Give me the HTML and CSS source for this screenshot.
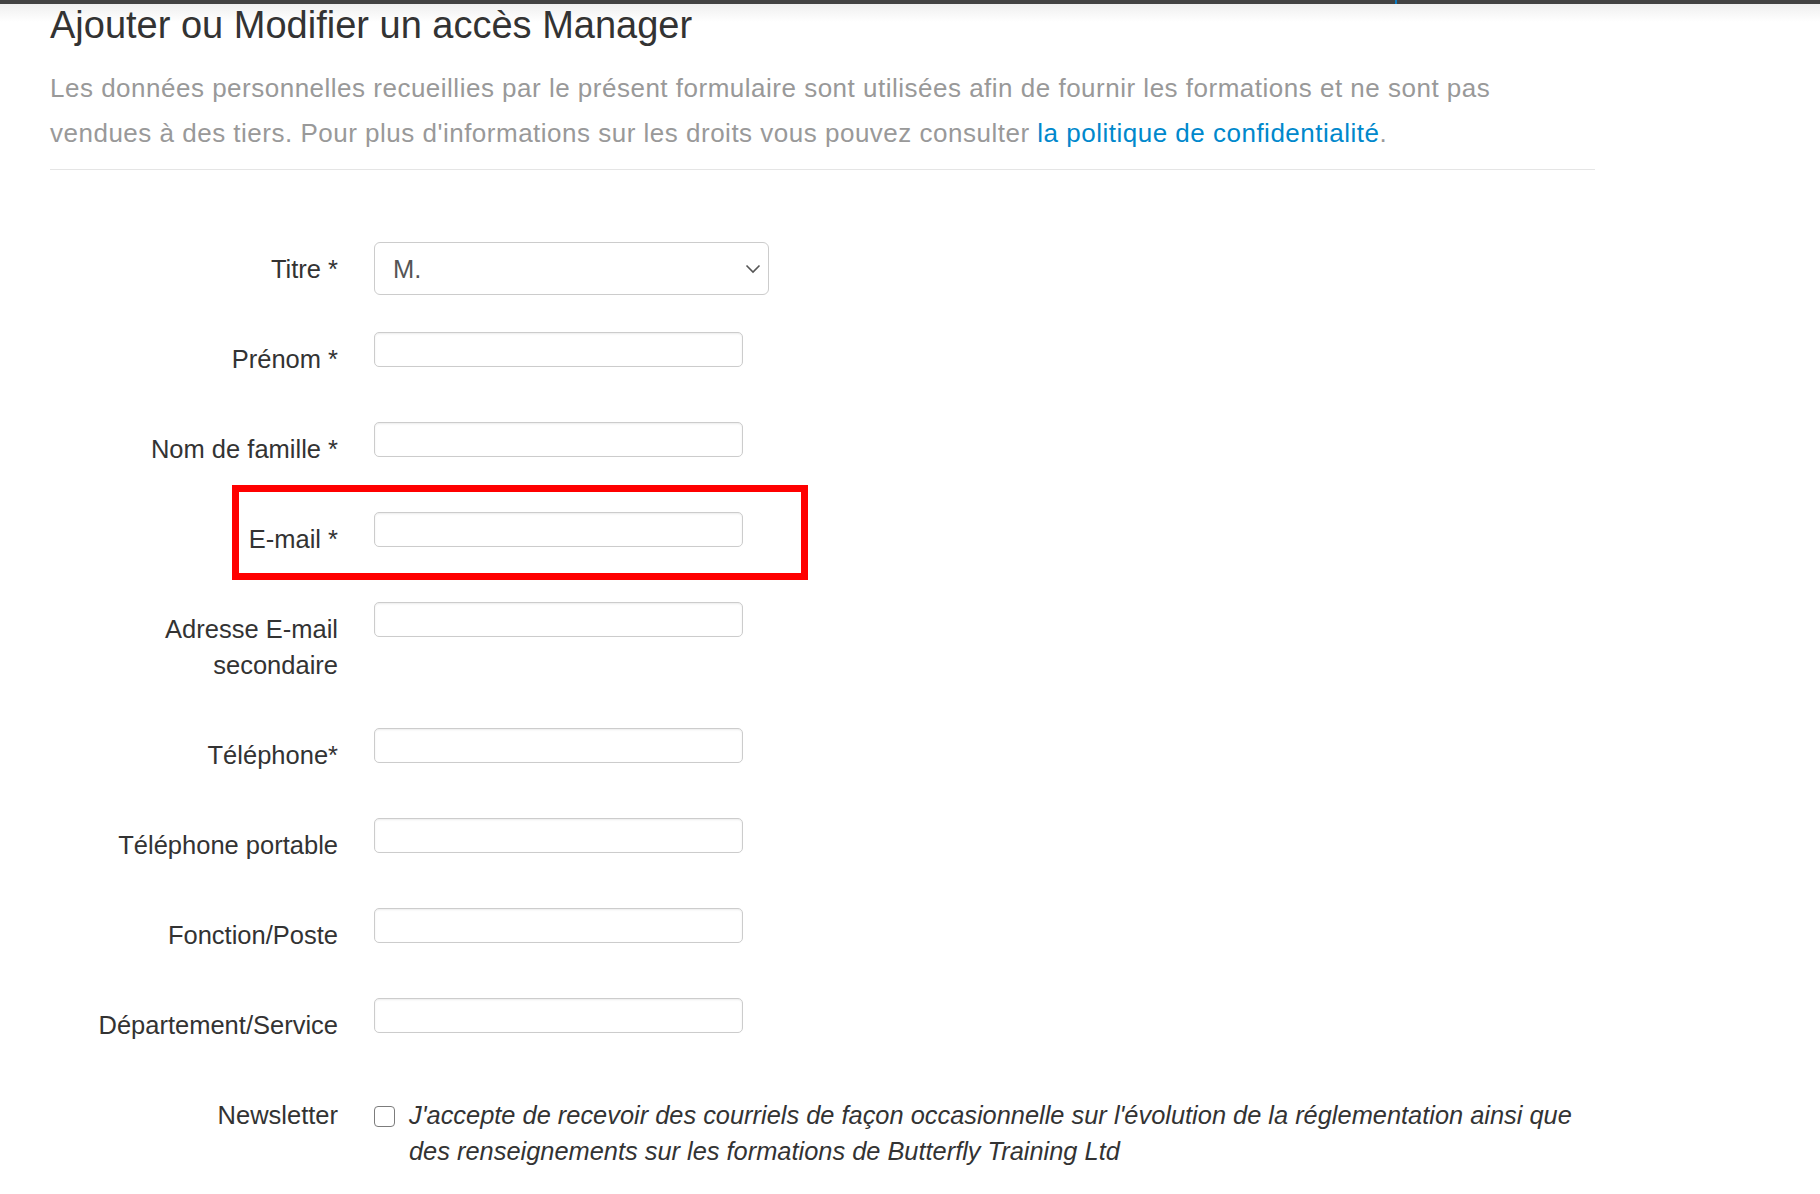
FILE: index.html
```html
<!DOCTYPE html>
<html lang="fr">
<head>
    <meta charset="UTF-8">
    <meta name="viewport" content="width=device-width, initial-scale=1.0">
    <title>Ajouter ou Modifier un accès Manager</title>
    <link rel="stylesheet" href="styles.css">
</head>
<body>
    <div class="topbar"><span class="topbar-tick"></span></div>
    <div class="page">
        <h1>Ajouter ou Modifier un accès Manager</h1>
        <p class="intro">Les données personnelles recueillies par le présent formulaire sont utilisées afin de fournir les formations et ne sont pas<br>vendues à des tiers. Pour plus d'informations sur les droits vous pouvez consulter <a href="#">la politique de confidentialité</a>.</p>
        <hr>

        <form class="form">
            <div class="row">
                <label class="row-label" for="titre">Titre *</label>
                <div class="select-wrap">
                    <select id="titre" class="select">
                        <option>M.</option>
                        <option>Mme</option>
                    </select>
                    <svg class="chevron" width="16" height="10" viewBox="0 0 16 10"><path d="M1.5 1.5 L8 8 L14.5 1.5" fill="none" stroke="#555" stroke-width="1.6"/></svg>
                </div>
            </div>
            <div class="row">
                <label class="row-label" for="prenom">Prénom *</label>
                <input class="input" type="text" id="prenom">
            </div>
            <div class="row">
                <label class="row-label" for="nom">Nom de famille *</label>
                <input class="input" type="text" id="nom">
            </div>
            <div class="row">
                <label class="row-label" for="email">E-mail *</label>
                <input class="input" type="text" id="email">
                <div class="highlight"></div>
            </div>
            <div class="row">
                <label class="row-label" for="email2">Adresse E-mail<br>secondaire</label>
                <input class="input" type="text" id="email2">
            </div>
            <div class="row">
                <label class="row-label" for="tel">Téléphone*</label>
                <input class="input" type="text" id="tel">
            </div>
            <div class="row">
                <label class="row-label" for="mobile">Téléphone portable</label>
                <input class="input" type="text" id="mobile">
            </div>
            <div class="row">
                <label class="row-label" for="poste">Fonction/Poste</label>
                <input class="input" type="text" id="poste">
            </div>
            <div class="row">
                <label class="row-label" for="service">Département/Service</label>
                <input class="input" type="text" id="service">
            </div>
            <div class="row">
                <span class="row-label">Newsletter</span>
                <label class="check">
                    <input type="checkbox" class="checkbox">
                    <em>J'accepte de recevoir des courriels de façon occasionnelle sur l'évolution de la réglementation ainsi que<br>des renseignements sur les formations de Butterfly Training Ltd</em>
                </label>
            </div>
        </form>
    </div>
</body>
</html>
```

FILE: styles.css
```css
body {
    margin: 0;
    background-color: #fff;
    color: #333;
    font-family: "Liberation Sans", Arial, sans-serif;
}
.topbar {
    position: relative;
    height: 4px;
    background-color: #424242;
}
.topbar::after {
    content: "";
    position: absolute;
    left: 0;
    right: 0;
    top: 4px;
    height: 18px;
    background: linear-gradient(#efefef, rgba(255, 255, 255, 0));
}
.topbar-tick {
    position: absolute;
    left: 1395px;
    top: 0;
    width: 2px;
    height: 4px;
    background-color: #0a7cc4;
}
.page {
    position: relative;
    padding: 0 50px;
    width: 1545px;
}
h1 {
    margin: 0;
    font-size: 38px;
    line-height: 42px;
    font-weight: normal;
    color: #333;
    position: relative;
}
.intro {
    margin: 20px 0 0;
    font-size: 26px;
    letter-spacing: 0.5px;
    line-height: 45px;
    color: #999;
}
.intro a {
    color: #0088cc;
    text-decoration: none;
}
hr {
    margin: 13px 0 0;
    border: 0;
    border-top: 1px solid #e5e5e5;
}
.form {
    padding-top: 72px;
}
.row {
    position: relative;
    display: grid;
    grid-template-columns: 288px 1fr;
    column-gap: 36px;
    align-items: start;
    min-height: 53px;
    margin-bottom: 37px;
}
.row-label {
    padding: 9px 0 8px;
    font-size: 25.5px;
    line-height: 36px;
    text-align: right;
    color: #333;
}
.input {
    box-sizing: border-box;
    width: 369px;
    height: 35px;
    margin: 0;
    padding: 4px 8px;
    border: 1px solid #ccc;
    border-radius: 5px;
    box-shadow: inset 0 1px 2px rgba(0, 0, 0, 0.08);
    font-family: inherit;
    font-size: 20px;
    background-color: #fff;
}
.select-wrap {
    position: relative;
    width: 395px;
}
.select {
    box-sizing: border-box;
    width: 395px;
    height: 53px;
    margin: 0;
    padding: 0 40px 0 18px;
    border: 1px solid #ccc;
    border-radius: 6px;
    background-color: #fff;
    font-family: inherit;
    font-size: 25.5px;
    color: #555;
    -webkit-appearance: none;
    appearance: none;
}
.chevron {
    position: absolute;
    right: 8px;
    top: 22px;
    pointer-events: none;
}
.highlight {
    position: absolute;
    left: 182px;
    top: -27px;
    width: 576px;
    height: 95px;
    box-sizing: border-box;
    border: 7px solid #ff0000;
    pointer-events: none;
}
.check {
    display: flex;
    align-items: flex-start;
    gap: 14px;
    padding-top: 9px;
    font-size: 25.4px;
    line-height: 36px;
    color: #333;
}
.checkbox {
    flex: none;
    box-sizing: border-box;
    width: 21px;
    height: 21px;
    margin: 9px 0 0;
    border: 1px solid #7c7c7c;
    border-radius: 4px;
    background-color: #fff;
    -webkit-appearance: none;
    appearance: none;
}
.check em {
    font-style: italic;
}
```
